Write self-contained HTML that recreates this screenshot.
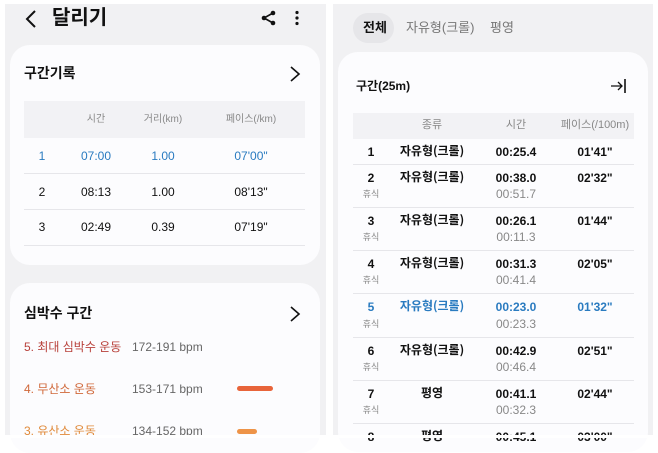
<!DOCTYPE html>
<html><head><meta charset="utf-8"><style>
*{margin:0;padding:0;box-sizing:border-box}
body{width:658px;height:438px;background:#fff;position:relative;overflow:hidden;font-family:"Liberation Sans","Noto Sans CJK KR",sans-serif;color:#111}
.p{position:absolute;background:#f1f1f3}
.a{position:absolute;white-space:nowrap;line-height:1.2}
.c{transform:translateX(-50%)}
.card{position:absolute;background:#fcfcfe;border-radius:20px}
.ln{position:absolute;height:1px;background:#e6e6ea}
.hd{position:absolute;background:#f2f2f5}
.g{color:#888;font-size:10px}
.b{color:#2a7bc0}
.k{font-family:"Noto Sans CJK KR",sans-serif;line-height:1}
</style></head><body>
<div class="p" style="left:5px;top:4px;width:321px;height:432px"></div>
<div class="p" style="left:333px;top:4px;width:320px;height:432px"></div>

<!-- left -->
<svg class="a" style="left:24px;top:9px" width="14" height="20"><path d="M11 2 L3 10 L11 18" fill="none" stroke="#111" stroke-width="2"/></svg>
<div class="a" style="left:52px;top:6px;font-size:20px;font-weight:bold">달리기</div>
<svg class="a" style="left:261px;top:10px" width="16" height="16"><circle cx="12" cy="3" r="2.3" fill="#111"/><circle cx="3" cy="8" r="2.3" fill="#111"/><circle cx="12" cy="13" r="2.3" fill="#111"/><path d="M12 3 L3 8 L12 13" stroke="#111" stroke-width="1.6" fill="none"/></svg>
<svg class="a" style="left:294px;top:10px" width="6" height="16"><circle cx="3" cy="2.5" r="1.6" fill="#111"/><circle cx="3" cy="8" r="1.6" fill="#111"/><circle cx="3" cy="13.5" r="1.6" fill="#111"/></svg>

<div class="card" style="left:10px;top:45px;width:310px;height:220px"></div>
<div class="a" style="left:24px;top:65px;font-size:14px;font-weight:bold">구간기록</div>
<svg class="a" style="left:289px;top:65px" width="12" height="18"><path d="M2 2 L10 9 L2 16" fill="none" stroke="#111" stroke-width="1.6"/></svg>
<div class="hd" style="left:24px;top:101px;width:281px;height:37px"></div>
<div class="a c g" style="left:96px;top:114px">시간</div>
<div class="a c g" style="left:163px;top:114px">거리(km)</div>
<div class="a c g" style="left:251px;top:114px">페이스(/km)</div>
<div style="font-size:12px">
<div class="a c b" style="left:42px;top:149px">1</div><div class="a c b" style="left:96px;top:149px">07:00</div><div class="a c b" style="left:163px;top:149px">1.00</div><div class="a c b" style="left:251px;top:149px">07'00"</div>
<div class="ln" style="left:24px;top:173px;width:281px"></div>
<div class="a c" style="left:42px;top:185px">2</div><div class="a c" style="left:96px;top:185px">08:13</div><div class="a c" style="left:163px;top:185px">1.00</div><div class="a c" style="left:251px;top:185px">08'13"</div>
<div class="ln" style="left:24px;top:209px;width:281px"></div>
<div class="a c" style="left:42px;top:220px">3</div><div class="a c" style="left:96px;top:220px">02:49</div><div class="a c" style="left:163px;top:220px">0.39</div><div class="a c" style="left:251px;top:220px">07'19"</div>
<div class="ln" style="left:24px;top:245px;width:281px"></div>
</div>

<div class="card" style="left:10px;top:283px;width:310px;height:170px"></div>
<div class="a" style="left:24px;top:305px;font-size:14px;font-weight:bold">심박수 구간</div>
<svg class="a" style="left:289px;top:305px" width="12" height="18"><path d="M2 2 L10 9 L2 16" fill="none" stroke="#111" stroke-width="1.6"/></svg>
<div class="a" style="left:24px;top:340px;font-size:12px;color:#b8403a">5. 최대 심박수 운동</div>
<div class="a" style="left:132px;top:340px;font-size:12px;color:#666">172-191 bpm</div>
<div class="a" style="left:24px;top:382px;font-size:12px;color:#d0683a">4. 무산소 운동</div>
<div class="a" style="left:132px;top:382px;font-size:12px;color:#666">153-171 bpm</div>
<div class="a" style="left:237px;top:386px;width:36px;height:5px;border-radius:3px;background:#e8643a"></div>
<div class="a" style="left:24px;top:424px;font-size:12px;color:#e08a3a">3. 유산소 운동</div>
<div class="a" style="left:132px;top:424px;font-size:12px;color:#666">134-152 bpm</div>
<div class="a" style="left:237px;top:429px;width:20px;height:5px;border-radius:3px;background:#ee9448"></div>

<!-- right -->
<div class="a" style="left:353px;top:13px;width:41px;height:30px;border-radius:15px;background:#e6e6e9"></div>
<div class="a" style="left:363px;top:20px;font-size:13px;font-weight:bold">전체</div>
<div class="a" style="left:406px;top:20px;font-size:13px;color:#777">자유형(크롤)</div>
<div class="a" style="left:490px;top:20px;font-size:13px;color:#777">평영</div>

<div class="card" style="left:338px;top:52px;width:310px;height:400px"></div>
<div class="a" style="left:356px;top:79px;font-size:12px;font-weight:bold">구간(25m)</div>
<svg class="a" style="left:610px;top:77px" width="18" height="18"><path d="M1 9 H12 M8 5 L12 9 L8 13" fill="none" stroke="#111" stroke-width="1.3"/><path d="M15 2 V16" stroke="#111" stroke-width="1.6"/></svg>
<div class="hd" style="left:353px;top:113px;width:281px;height:26px"></div>
<div class="a c g" style="left:432px;top:119px;font-size:11px">종류</div>
<div class="a c g" style="left:516px;top:119px;font-size:11px">시간</div>
<div class="a c g" style="left:595px;top:119px;font-size:11px">페이스(/100m)</div>

<div style="font-size:12px;font-weight:bold">
<div class="a c" style="left:371px;top:145px">1</div><div class="a c k" style="left:432px;top:145px">자유형(크롤)</div><div class="a c" style="left:516px;top:145px">00:25.4</div><div class="a c" style="left:595px;top:145px">01'41"</div>
<div class="ln" style="left:353px;top:164px;width:281px"></div>
<div class="a c" style="left:371px;top:171px">2</div><div class="a c k" style="left:432px;top:171px">자유형(크롤)</div><div class="a c" style="left:516px;top:171px">00:38.0</div><div class="a c" style="left:595px;top:171px">02'32"</div>
<div class="ln" style="left:353px;top:207px;width:281px"></div>
<div class="a c" style="left:371px;top:214px">3</div><div class="a c k" style="left:432px;top:214px">자유형(크롤)</div><div class="a c" style="left:516px;top:214px">00:26.1</div><div class="a c" style="left:595px;top:214px">01'44"</div>
<div class="ln" style="left:353px;top:250px;width:281px"></div>
<div class="a c" style="left:371px;top:257px">4</div><div class="a c k" style="left:432px;top:257px">자유형(크롤)</div><div class="a c" style="left:516px;top:257px">00:31.3</div><div class="a c" style="left:595px;top:257px">02'05"</div>
<div class="ln" style="left:353px;top:293px;width:281px"></div>
<div class="a c b" style="left:371px;top:300px">5</div><div class="a c b k" style="left:432px;top:300px">자유형(크롤)</div><div class="a c b" style="left:516px;top:300px">00:23.0</div><div class="a c b" style="left:595px;top:300px">01'32"</div>
<div class="ln" style="left:353px;top:337px;width:281px"></div>
<div class="a c" style="left:371px;top:344px">6</div><div class="a c k" style="left:432px;top:344px">자유형(크롤)</div><div class="a c" style="left:516px;top:344px">00:42.9</div><div class="a c" style="left:595px;top:344px">02'51"</div>
<div class="ln" style="left:353px;top:380px;width:281px"></div>
<div class="a c" style="left:371px;top:387px">7</div><div class="a c k" style="left:432px;top:387px">평영</div><div class="a c" style="left:516px;top:387px">00:41.1</div><div class="a c" style="left:595px;top:387px">02'44"</div>
<div class="ln" style="left:353px;top:423px;width:281px"></div>
<div class="a c" style="left:371px;top:430px">8</div><div class="a c k" style="left:432px;top:430px">평영</div><div class="a c" style="left:516px;top:430px">00:45.1</div><div class="a c" style="left:595px;top:430px">03'00"</div>
</div>
<div style="font-size:12px;color:#888">
<div class="a c" style="left:371px;top:189px;font-size:9px">휴식</div><div class="a c" style="left:516px;top:187px">00:51.7</div>
<div class="a c" style="left:371px;top:232px;font-size:9px">휴식</div><div class="a c" style="left:516px;top:230px">00:11.3</div>
<div class="a c" style="left:371px;top:275px;font-size:9px">휴식</div><div class="a c" style="left:516px;top:273px">00:41.4</div>
<div class="a c" style="left:371px;top:319px;font-size:9px">휴식</div><div class="a c" style="left:516px;top:317px">00:23.3</div>
<div class="a c" style="left:371px;top:362px;font-size:9px">휴식</div><div class="a c" style="left:516px;top:360px">00:46.4</div>
<div class="a c" style="left:371px;top:405px;font-size:9px">휴식</div><div class="a c" style="left:516px;top:403px">00:32.3</div>
</div>
<div class="a" style="left:0;top:435px;width:658px;height:3px;background:#fff"></div>
</body></html>
